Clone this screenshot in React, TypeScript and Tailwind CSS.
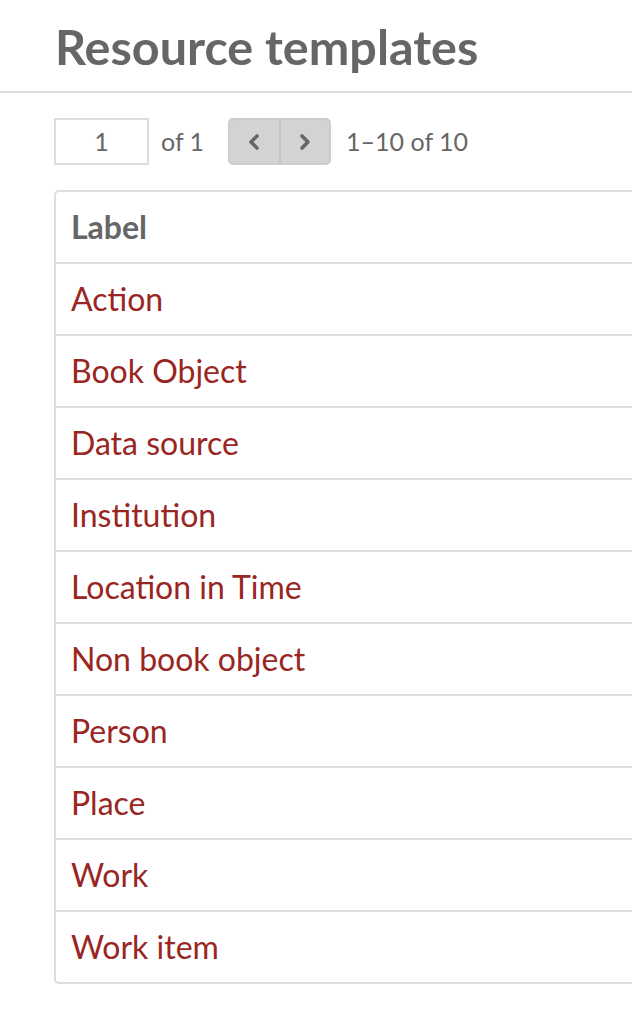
import React from 'react';

const templates = [
  'Action',
  'Book Object',
  'Data source',
  'Institution',
  'Location in Time',
  'Non book object',
  'Person',
  'Place',
  'Work',
  'Work item',
];

const ChevronLeft = () => (
  <svg width="16" height="18" viewBox="0 0 16 18" fill="none">
    <path d="M11 3 L5 9 L11 15" stroke="#666" strokeWidth="3.6" strokeLinecap="round" strokeLinejoin="round" />
  </svg>
);

const ChevronRight = () => (
  <svg width="16" height="18" viewBox="0 0 16 18" fill="none">
    <path d="M5 3 L11 9 L5 15" stroke="#666" strokeWidth="3.6" strokeLinecap="round" strokeLinejoin="round" />
  </svg>
);

const App: React.FC = () => {
  return (
    <div className="w-full min-h-screen overflow-hidden bg-white font-['Lato',sans-serif]">
      <div className="border-b-2 border-[#dddddd] pl-[55px] pt-[15px] h-[93px]">
        <h1 className="text-[48.5px] leading-[62px] font-bold text-[#666666]">Resource templates</h1>
      </div>

      <div className="flex items-center ml-[54px] mt-[25px] h-[47px] text-[25px] text-[#666666]">
        <div className="w-[95px] h-[47px] border-2 border-[#dddddd] flex items-center justify-center">1</div>
        <span className="ml-[12px]">of 1</span>
        <div className="ml-[24px] flex h-[47px] w-[103px] rounded-[5px] border-2 border-[#cccccc] bg-[#d3d3d3]">
          <div className="flex-1 flex items-center justify-center border-r-2 border-[#c4c4c4]">
            <ChevronLeft />
          </div>
          <div className="flex-1 flex items-center justify-center">
            <ChevronRight />
          </div>
        </div>
        <span className="ml-[15px]">1–10 of 10</span>
      </div>

      <div className="ml-[54px] mt-[25px] w-[900px] border-2 border-[#dddddd] rounded-[5px]">
        <div className="h-[70px] flex items-center px-[15px] text-[32px] font-bold text-[#666666]">Label</div>
        {templates.map((t) => (
          <div key={t} className="h-[72px] flex items-center px-[15px] border-t-2 border-[#dddddd]">
            <a href="#" className="text-[32px] text-[#992622]">{t}</a>
          </div>
        ))}
      </div>
    </div>
  );
};

export default App;
